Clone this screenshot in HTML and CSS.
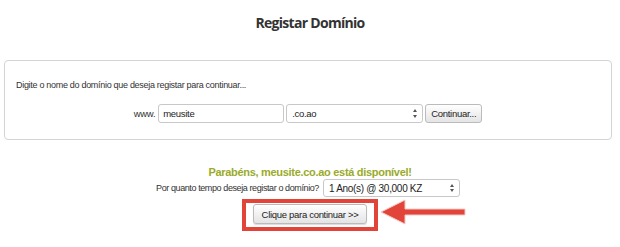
FILE: index.html
```html
<!DOCTYPE html>
<html lang="pt">
<head>
  <meta charset="UTF-8" />
  <title>Registar Domínio</title>
  <link rel="stylesheet" href="styles.css">
</head>
<body>
  <h2 class="title">Registar Domínio</h2>

  <div class="panel">
    <p class="intro">Digite o nome do domínio que deseja registar para continuar...</p>
    <div class="search-row">
      <span>www.</span>
      <input type="text" class="domain" value="meusite" />
      <span class="select-wrap tld"><select><option>.co.ao</option></select></span>
      <button class="btn">Continuar...</button>
    </div>
  </div>

  <div class="result">
    <p class="success">Parabéns, meusite.co.ao está disponível!</p>
    <div class="period-row">
      <label>Por quanto tempo deseja registar o domínio?</label>
      <span class="select-wrap period"><select><option>1 Ano(s) @ 30,000 KZ</option></select></span>
    </div>
    <div class="highlight">
      <div class="mark">
        <button class="btn wide">Clique para continuar &gt;&gt;</button>
      </div>
      <svg class="arrow" width="88" height="28" viewBox="0 0 88 28">
        <polygon points="2,14 26,2 26,11 86,11 86,17 26,17 26,26" fill="#e2443a" stroke="#f4c9c5" stroke-width="1" stroke-linejoin="round" />
      </svg>
    </div>
  </div>
</body>
</html>
```

FILE: styles.css
```css
body {
  margin: 0;
  font-family: "Liberation Sans", Arial, sans-serif;
  font-size: 9px;
  letter-spacing: -0.3px;
  color: #333;
  background: #fff;
}
.title {
  margin: 13px 0 0;
  text-align: center;
  font-family: "Open Sans", sans-serif;
  font-size: 14px;
  line-height: 20px;
  font-weight: 700;
  letter-spacing: -0.7px;
  color: #333;
}
.panel {
  margin: 27px 8px 0 4px;
  height: 78px;
  border: 1px solid #d4d4d4;
  border-radius: 4px;
  padding: 0 11px;
}
.intro {
  margin: 17px 0 0;
  line-height: 14px;
}
.search-row {
  display: flex;
  justify-content: center;
  align-items: center;
  gap: 2px;
  margin-top: 12px;
  padding-right: 0;
}
.search-row > span:first-child {
  margin-right: 1px;
  font-size: 9.5px;
}
input.domain {
  width: 126px;
  height: 19px;
  box-sizing: border-box;
  border: 1px solid #c8c8c8;
  border-radius: 3px;
  padding: 0 4px;
  font: 9.5px "Liberation Sans", Arial, sans-serif;
  letter-spacing: -0.3px;
  color: #222;
}
.select-wrap {
  position: relative;
  display: inline-block;
}
.select-wrap::before,
.select-wrap::after {
  content: "";
  position: absolute;
  right: 6px;
  border-left: 2.5px solid transparent;
  border-right: 2.5px solid transparent;
  pointer-events: none;
}
.select-wrap::before {
  top: 5px;
  border-bottom: 3px solid #555;
}
.select-wrap::after {
  bottom: 5px;
  border-top: 3px solid #555;
}
select {
  display: block;
  appearance: none;
  height: 19px;
  width: 100%;
  box-sizing: border-box;
  border: 1px solid #c8c8c8;
  border-radius: 3px;
  background: #fff;
  font: 9.5px "Liberation Sans", Arial, sans-serif;
  letter-spacing: -0.3px;
  color: #222;
  padding: 0 5px;
}
.select-wrap.tld {
  width: 137px;
}
.btn {
  height: 19px;
  border: 1px solid #bbb;
  border-radius: 3px;
  background: linear-gradient(#fff, #e4e4e4);
  font: 9.5px "Liberation Sans", Arial, sans-serif;
  letter-spacing: -0.3px;
  color: #222;
  padding: 0 5px;
  white-space: nowrap;
}
.result {
  text-align: center;
}
.success {
  margin: 24px 0 0;
  font-size: 11px;
  letter-spacing: -0.3px;
  line-height: 16px;
  font-weight: 700;
  color: #9aaa2a;
}
.period-row {
  display: flex;
  justify-content: center;
  align-items: center;
  gap: 4px;
  margin-top: -1px;
  padding-right: 4px;
}
.period-row label {
  letter-spacing: -0.4px;
}
.select-wrap.period {
  width: 137px;
}
.select-wrap.period select {
  height: 18px;
  font-size: 10px;
}
.highlight {
  position: relative;
  display: inline-block;
  margin-top: 2px;
}
.mark {
  border: 4px solid #e2443a;
  padding: 1px 7px 3px;
}
.btn.wide {
  width: 114px;
  height: 20px;
  box-shadow: 0 1px 1px rgba(0, 0, 0, 0.15);
}
.arrow {
  position: absolute;
  left: 137px;
  top: -1px;
}
```
